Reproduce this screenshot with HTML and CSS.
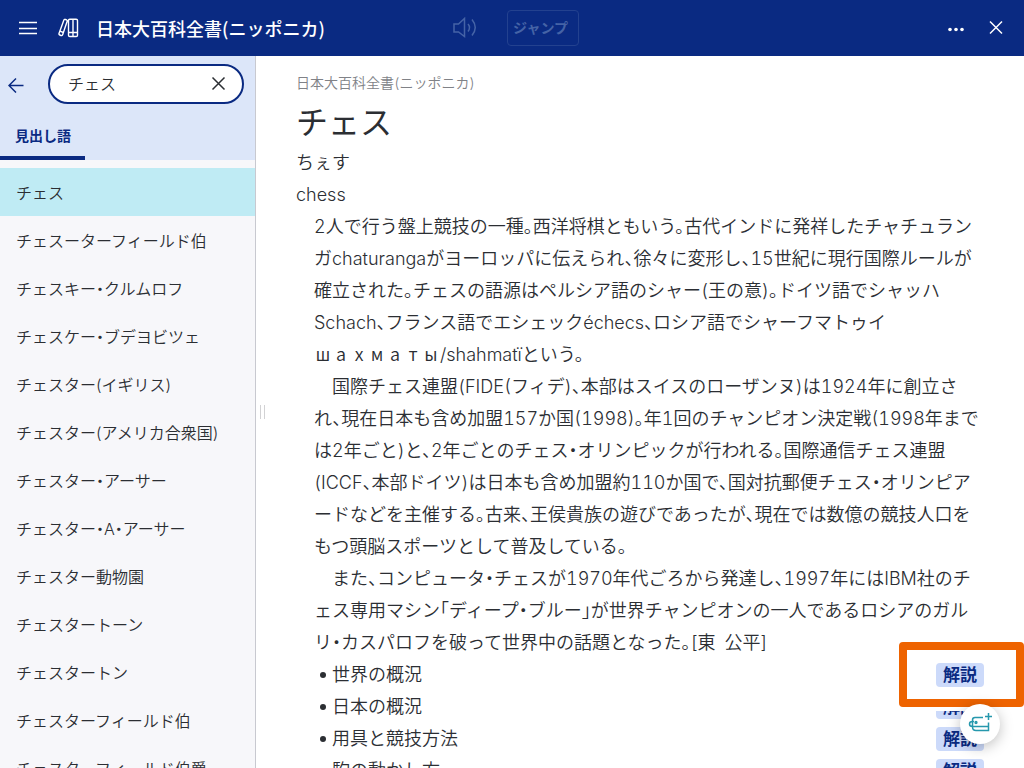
FILE: index.html
```html
<!DOCTYPE html>
<html lang="ja">
<head>
<meta charset="utf-8">
<title>日本大百科全書(ニッポニカ)</title>
<link rel="stylesheet" href="styles.css">
</head>
<body>
<div class="app">
  <header class="topbar">
    <button class="icon-btn" aria-label="メニュー">
      <svg width="20" height="20" viewBox="0 0 20 20"><path d="M1 4.500h18M1 10.500h18M1 15.500h18"/></svg>
    </button>
    <div class="brand">
      <svg class="books" width="22" height="20" viewBox="0 0 22 20"><path d="M5.800 2.200Q6.300 1 7.500 1.500l1 .4Q9.600 2.400 9.100 3.600L4.700 16.500Q4.200 18 3 17.500l-1.200-.5Q.6 16.500 1.100 15.200zM2 13.200l3.400 1.300M10.500 2.500q0-1.300 1.300-1.300H15v17.300h-3.200q-1.300 0-1.300-1.300zM15 1.200h3.200q1.300 0 1.300 1.300v14.700q0 1.300-1.300 1.300H15M10.500 14.500h9"/></svg>
      <h2 class="book-title">日本大百科全書(ニッポニカ)</h2>
    </div>
    <div class="tools">
      <button class="icon-btn dim" aria-label="音声" disabled>
        <svg width="28" height="24" viewBox="0 0 28 24"><path d="M3 8h4.500L13.500 2.500v18L7.500 16H3zM17 8q3 3.500 0 7.500M21 3.500q6.500 8 0 16"/></svg>
      </button>
      <button class="jump" disabled>ジャンプ</button>
    </div>
    <button class="icon-btn" aria-label="その他">
      <svg width="20" height="20" viewBox="0 0 20 20"><g class="dots"><circle cx="4" cy="11.500" r="1.800"/><circle cx="10" cy="11.500" r="1.800"/><circle cx="16" cy="11.500" r="1.800"/></g></svg>
    </button>
    <button class="icon-btn" aria-label="閉じる">
      <svg width="20" height="20" viewBox="0 0 20 20"><path d="M4 3.500l12 12M16 3.500l-12 12"/></svg>
    </button>
  </header>
  <div class="body">
    <aside class="sidebar">
      <div class="search-row">
        <button class="back" aria-label="戻る">
          <svg width="16" height="18" viewBox="0 0 16 18"><path d="M15.500 10.500H1M8 3.500l-7 7 7 7"/></svg>
        </button>
        <div class="search">
          <input type="text" value="チェス" aria-label="検索">
          <button class="clear" aria-label="クリア">
            <svg width="16" height="16" viewBox="0 0 16 16"><path d="M2.500 1.500l12 12M14.500 1.500l-12 12"/></svg>
          </button>
        </div>
      </div>
      <div class="tabs"><button class="tab">見出し語</button></div>
      <ul class="entries">
        <li><a class="entry current" href="#">チェス</a></li>
        <li><a class="entry" href="#">チェスーターフィールド伯</a></li>
        <li><a class="entry" href="#">チェスキー・クルムロフ</a></li>
        <li><a class="entry" href="#">チェスケー・ブデヨビツェ</a></li>
        <li><a class="entry" href="#">チェスター(イギリス)</a></li>
        <li><a class="entry" href="#">チェスター(アメリカ合衆国)</a></li>
        <li><a class="entry" href="#">チェスター・アーサー</a></li>
        <li><a class="entry" href="#">チェスター・A・アーサー</a></li>
        <li><a class="entry" href="#">チェスター動物園</a></li>
        <li><a class="entry" href="#">チェスタートーン</a></li>
        <li><a class="entry" href="#">チェスタートン</a></li>
        <li><a class="entry" href="#">チェスターフィールド伯</a></li>
        <li><a class="entry" href="#">チェスターフィールド伯爵</a></li>
      </ul>
    </aside>
    <div class="splitter"></div>
    <main class="article">
      <p class="source">日本大百科全書(ニッポニカ)</p>
      <h1>チェス</h1>
      <p>ちぇす</p>
      <p>chess</p>
      <div class="text">
        <p>2人で行う盤上競技の一種。西洋将棋ともいう。古代インドに発祥したチャチュラン<br>ガchaturangaがヨーロッパに伝えられ、徐々に変形し、15世紀に現行国際ルールが<br>確立された。チェスの語源はペルシア語のシャー(王の意)。ドイツ語でシャッハ<br>Schach、フランス語でエシェックéchecs、ロシア語でシャーフマトゥイ<br><span class="wide">ш</span><span class="wide">а</span><span class="wide">х</span><span class="wide">м</span><span class="wide">а</span><span class="wide">т</span><span class="wide">ы</span>/shahmatïという。</p>
        <p class="indent">国際チェス連盟(FIDE(フィデ)、本部はスイスのローザンヌ)は1924年に創立さ<br>れ、現在日本も含め加盟157か国(1998)。年1回のチャンピオン決定戦(1998年まで<br>は2年ごと)と、2年ごとのチェス・オリンピックが行われる。国際通信チェス連盟<br>(ICCF、本部ドイツ)は日本も含め加盟約110か国で、国対抗郵便チェス・オリンピア<br>ードなどを主催する。古来、王侯貴族の遊びであったが、現在では数億の競技人口を<br>もつ頭脳スポーツとして普及している。</p>
        <p class="indent">また、コンピュータ・チェスが1970年代ごろから発達し、1997年にはIBM社のチ<br>ェス専用マシン「ディープ・ブルー」が世界チャンピオンの一人であるロシアのガル<br>リ・カスパロフを破って世界中の話題となった。[東&ensp;公平]</p>
      </div>
      <ul class="topics">
        <li><span>世界の概況</span><a class="badge" href="#">解説</a></li>
        <li><span>日本の概況</span><a class="badge" href="#">解説</a></li>
        <li><span>用具と競技方法</span><a class="badge" href="#">解説</a></li>
        <li><span>駒の動かし方</span><a class="badge" href="#">解説</a></li>
      </ul>
    </main>
  </div>
  <div class="highlight"><a class="badge" href="#">解説</a></div>
  <button class="fab" aria-label="付箋を追加">
    <svg width="28" height="24" viewBox="0 0 28 24"><path d="M17 5.500H9Q6.500 5.500 6.500 8v7q0 3.500 3.500 3.500h12.500V10.500M8 14.500h14.500M8 9.500H6.500C2.500 9.500 2.500 14.500 6.500 14.500H8M22.500 1v7M19 4.500h7"/><circle cx="10" cy="10.500" r=".9"/></svg>
  </button>
</div>
</body>
</html>
```
FILE: styles.css
```css
* { box-sizing: border-box; }
body, h1, h2, p, ul { margin: 0; padding: 0; }
body {
  font-family: Inter, "Noto Sans CJK JP", sans-serif;
  font-weight: 350;
  color: #2b2e33;
  background: #fff;
}
ul { list-style: none; }
a { color: inherit; text-decoration: none; }
button {
  font-family: inherit;
  border: 0;
  padding: 0;
  background: none;
  color: inherit;
}
svg { display: block; fill: none; stroke: currentColor; stroke-width: 1.5; }

.app {
  position: relative;
  height: 100vh;
  display: flex;
  flex-direction: column;
  overflow: hidden;
}

.topbar {
  position: relative;
  flex: 0 0 56px;
  display: flex;
  align-items: center;
  gap: 20px;
  padding: 0 18px;
  background: #0a2a82;
  color: #fff;
}
.brand {
  flex: 1;
  display: flex;
  align-items: center;
  gap: 16px;
}
.book-title {
  font-family: "Noto Sans CJK JP", sans-serif;
  font-size: 18px;
  font-weight: 500;
}
.books { stroke-width: 1.4; }
.dots { fill: currentColor; stroke: none; }
.tools {
  position: absolute;
  left: 44%;
  display: flex;
  align-items: center;
  gap: 28px;
  color: #4563a6;
}
.jump {
  width: 72px;
  height: 36px;
  padding: 0 4px 2px 0;
  border: 1px solid #23418f;
  border-radius: 4px;
  font-size: 14px;
  font-weight: 700;
}

.body { flex: 1; min-height: 0; display: flex; }
.sidebar {
  flex: 0 0 256px;
  background: #f7f7fa;
  border-right: 1px solid #c8c9d0;
  overflow: hidden;
}
.search-row {
  display: flex;
  align-items: center;
  gap: 24px;
  padding: 8px 11px 8px 8px;
  background: #dce6f9;
  color: #0a2a82;
}
.search {
  flex: 1;
  min-width: 0;
  display: flex;
  align-items: center;
  height: 40px;
  padding: 0 16px 0 18px;
  border: 2px solid #0a2a82;
  border-radius: 20px;
  background: #fff;
  color: #2b2e33;
}
.search input {
  flex: 1;
  min-width: 0;
  border: 0;
  padding: 0 0 2px;
  outline: 0;
  background: none;
  font: inherit;
  font-size: 16px;
  color: inherit;
}
.tabs { height: 48px; background: #dce6f9; }
.tab {
  height: 48px;
  padding: 2px 14px 0 15px;
  border-bottom: 4px solid #0a2a82;
  color: #0a2a82;
  font-size: 14px;
  font-weight: 700;
}
.entries { padding-top: 8px; font-feature-settings: "halt"; }
.entry {
  display: block;
  padding: 2px 16px 0;
  font-size: 16px;
  line-height: 46px;
  white-space: nowrap;
}
.current { background: #bfebf4; }

.splitter {
  align-self: center;
  margin-left: 4px;
  width: 5px;
  height: 14px;
  border: 1px solid #d2d2d4;
  border-width: 0 1px;
}

.article {
  flex: 1;
  min-width: 0;
  padding: 11px 40px 0 31px;
  font-size: 18px;
  line-height: 32px;
  font-feature-settings: "halt", "tnum";
  line-break: loose;
  overflow: hidden;
}
.source { color: #808287; font-size: 14px; }
h1 { font-size: 32px; font-weight: 400; line-height: 48px; }
.text { padding-left: 18px; }
.indent { text-indent: 18px; }
.wide {
  display: inline-block;
  width: 18px;
  font-family: "Noto Sans CJK JP", sans-serif;
  line-height: 24px;
  text-align: center;
  text-indent: 0;
}

.topics { padding-left: 18px; }
.topics li {
  display: flex;
  align-items: center;
  justify-content: space-between;
}
.topics span::before {
  content: "";
  display: inline-block;
  width: 6px;
  height: 6px;
  margin: 0 6px 3px;
  border-radius: 50%;
  background: #2b2e33;
}
.badge {
  width: 48px;
  height: 24px;
  border-radius: 4px;
  background: #ccdafa;
  color: #0a2a82;
  font-size: 17px;
  font-weight: 700;
  line-height: 24px;
  text-align: center;
}

.highlight {
  position: absolute;
  right: 0;
  top: 642px;
  width: 125px;
  height: 65px;
  padding: 13px 0 0 29px;
  border: 8px solid #ee6300;
  border-radius: 4px;
  background: #fff;
  box-shadow: 0 4px 0 #fff;
}
.highlight .badge { display: block; }
.fab {
  position: absolute;
  right: 24px;
  top: 704px;
  width: 40px;
  height: 40px;
  display: flex;
  align-items: center;
  justify-content: center;
  border-radius: 50%;
  background: #fff;
  color: #2698ad;
  box-shadow: 0 3px 14px rgba(0, 0, 0, .25);
}
```
